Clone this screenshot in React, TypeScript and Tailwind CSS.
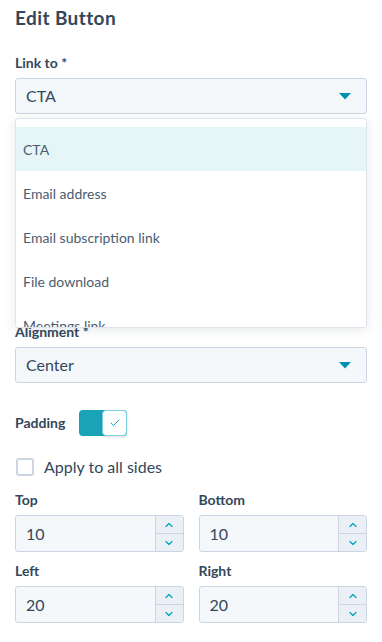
import { ChevronDown, ChevronUp, Check } from 'lucide-react';

const font = { fontFamily: 'Lato, "Noto Sans", sans-serif' };

function Caret() {
  return (
    <svg width="12" height="7" viewBox="0 0 12 7" className="shrink-0">
      <path d="M0 0 H12 L6 6.5 Z" fill="#0091ae" />
    </svg>
  );
}

function Select({ value }: { value: string }) {
  return (
    <div className="flex h-[36px] items-center justify-between rounded-[3px] border border-[#cbd6e2] bg-[#f5f8fa] pl-[10px] pr-[15px] text-[16px] text-[#33475b]">
      <span>{value}</span>
      <Caret />
    </div>
  );
}

function Label({ children }: { children: React.ReactNode }) {
  return <div className="text-[14px] font-bold leading-[20px] text-[#33475b]">{children}</div>;
}

function NumberField({ label, value }: { label: string; value: string }) {
  return (
    <div className="flex flex-col gap-[5px]">
      <Label>{label}</Label>
      <div className="flex h-[37px] overflow-hidden rounded-[3px] border border-[#cbd6e2] bg-[#f5f8fa]">
        <div className="flex flex-1 items-center pl-[10px] text-[16px] text-[#33475b]">{value}</div>
        <div className="flex w-[28px] flex-col border-l border-[#cbd6e2] bg-[#eaf0f6]">
          <div className="flex flex-1 items-center justify-center border-b border-[#cbd6e2]">
            <ChevronUp size={12} strokeWidth={2.5} color="#00a4bd" />
          </div>
          <div className="flex flex-1 items-center justify-center">
            <ChevronDown size={12} strokeWidth={2.5} color="#00a4bd" />
          </div>
        </div>
      </div>
    </div>
  );
}

const options = ['CTA', 'Email address', 'Email subscription link', 'File download', 'Meetings link'];

export default function App() {
  return (
    <div className="relative h-[642px] w-[382px] overflow-hidden bg-white px-[15px]" style={font}>
      <h1 className="pt-[6px] text-[19px] font-bold leading-[24px] tracking-[0.4px] text-[#33475b]">Edit Button</h1>

      <div className="mt-[23px] flex flex-col gap-[5px]">
        <Label>Link to *</Label>
        <Select value="CTA" />
      </div>

      <div className="h-[208px]" />

      <div className="flex flex-col gap-[5px]">
        <Label>Alignment *</Label>
        <Select value="Center" />
      </div>

      <div className="mt-[27px] flex items-center gap-[14px]">
        <Label>Padding</Label>
        <div className="flex h-[26px] w-[48px] rounded-[4px] bg-[#1ba3b9]">
          <div className="ml-auto flex h-[26px] w-[25px] items-center justify-center rounded-[4px] border border-[#7fd1de] bg-white shadow-[0_1px_3px_rgba(0,0,0,0.15)]">
            <Check size={12} strokeWidth={2} color="#1ba3b9" />
          </div>
        </div>
      </div>

      <div className="mt-[19px] flex items-center gap-[10px] pl-[1px]">
        <div className="h-[18px] w-[18px] rounded-[3px] border-2 border-[#cbd6e2] bg-white" />
        <span className="text-[16px] text-[#33475b]">Apply to all sides</span>
      </div>

      <div className="mt-[11px] grid grid-cols-2 gap-x-[15px] gap-y-[9px]">
        <NumberField label="Top" value="10" />
        <NumberField label="Bottom" value="10" />
        <NumberField label="Left" value="20" />
        <NumberField label="Right" value="20" />
      </div>

      <div className="absolute left-[15px] top-[118px] h-[210px] w-[352px] overflow-hidden rounded-[3px] border border-[#dfe3eb] bg-white pt-[8px] shadow-[0_2px_12px_rgba(45,62,80,0.12)]">
        {options.map((o, i) => (
          <div
            key={o}
            className={`flex h-[44px] items-center px-[7px] text-[14px] text-[#4a5d70] ${i === 0 ? 'bg-[#e5f5f8]' : ''}`}
          >
            {o}
          </div>
        ))}
      </div>
    </div>
  );
}
